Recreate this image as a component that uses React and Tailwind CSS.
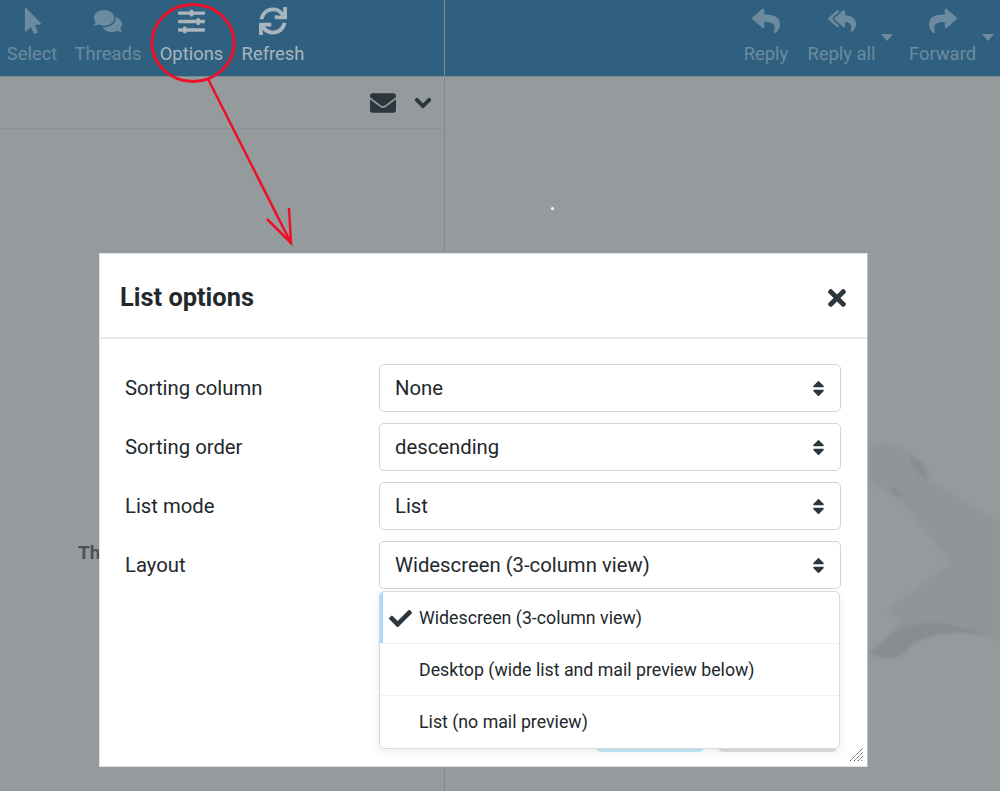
import { FaMousePointer, FaComments, FaSlidersH, FaSync, FaReply, FaReplyAll, FaShare, FaEnvelope, FaChevronDown, FaTimes, FaCheck, FaSort } from 'react-icons/fa';

function ToolButton({ icon: Icon, label, dim, size = 'text-[28px]', caret, width }) {
  return (
    <div className={`relative flex flex-col items-center ${width} ${dim ? 'text-[#6c8b9f]' : 'text-[#a9b5bc]'}`}>
      <div className="h-[40px] flex items-center justify-center">
        <Icon className={size} />
      </div>
      <span className="text-[18.4px] leading-[26px] whitespace-nowrap">{label}</span>
      {/* small dropdown caret */}
      {caret && <span className="absolute right-[-18px] top-[33px] w-0 h-0 border-x-[6px] border-x-transparent border-t-[7px] border-t-[#6c8b9f]" />}
    </div>
  );
}

function SelectRow({ label, value }) {
  return (
    <div className="flex items-center h-[48px]">
      <div className="w-[254px] text-[20.3px] text-[#22282c]">{label}</div>
      <div className="w-[462px] h-[48px] flex items-center justify-between pl-[15px] pr-[12px] rounded-[5px] border border-[#cfd6da] text-[20.3px] text-[#22282c]">
        <span>{value}</span>
        <FaSort className="text-[19px] text-[#2c363c]" />
      </div>
    </div>
  );
}

function PopupItem({ label, active, last }) {
  return (
    <div className={`relative h-[52px] flex items-center pl-[39px] text-[17.75px] text-[#22282c] ${last ? '' : 'pt-[2px] border-b border-[#f0f2f3]'}`}>
      {active && <span className="absolute left-0 top-0 bottom-0 w-[3px] bg-[#a8dcf8]" />}
      {active && <FaCheck className="absolute left-[9px] top-[15px] text-[23px] text-[#2c363c]" />}
      {label}
    </div>
  );
}

export default function App() {
  return (
    <div className="relative w-[1000px] h-[791px] overflow-hidden bg-[#959a9c] font-['Roboto',sans-serif]">
      <div className="flex h-full">
        {/* list column */}
        <div className="w-[445px] flex flex-col border-r border-[#84898c]">
          <div className="h-[77px] bg-[#2f607f] border-b border-[#7f8a90] flex gap-[18px] pl-[7px] pt-[1px]">
            <ToolButton icon={FaMousePointer} label="Select" dim width="w-[50px]" size="text-[26px] translate-x-[1px]" />
            <ToolButton icon={FaComments} label="Threads" dim width="w-[66px]" />
            <ToolButton icon={FaSlidersH} label="Options" width="w-[65px]" size="text-[27px]" />
            <ToolButton icon={FaSync} label="Refresh" width="w-[62px]" />
          </div>
          <div className="h-[52px] border-b border-[#8d9294] flex items-center justify-end gap-[18px] pr-[12px]">
            <FaEnvelope className="text-[26px] text-[#2b363d]" />
            <FaChevronDown className="text-[18px] text-[#2b363d]" stroke="currentColor" strokeWidth="30" />
          </div>
          <div className="flex-1 pl-[78px] pt-[410px] text-[19px] font-bold text-[#4a5357]">Th</div>
        </div>
        {/* preview column */}
        <div className="flex-1 flex flex-col">
          <div className="h-[77px] bg-[#2f607f] border-b border-[#7f8a90] flex justify-end gap-[34px] pr-[24px] pt-[1px]">
            <div className="flex gap-[20px]">
              <ToolButton icon={FaReply} label="Reply" dim width="w-[44px]" />
              <ToolButton icon={FaReplyAll} label="Reply all" dim caret width="w-[67px]" />
            </div>
            <ToolButton icon={FaShare} label="Forward" dim caret width="w-[67px]" />
          </div>
        </div>
      </div>

      {/* watermark behind dialog */}
      <svg className="absolute left-[860px] top-[430px] blur-[1.5px]" width="140" height="240" viewBox="0 0 140 240" fill="#909597">
        <path d="M8 22 C20 8 50 10 68 50 L140 93 L140 210 C105 198 75 200 50 215 C45 228 25 232 8 222 C25 215 30 200 40 190 L27 180 L92 133 L43 73 L10 50 Z" />
        <path d="M50 25 C60 28 68 38 68 50 C58 46 50 36 50 25 Z" fill="#888d8f" />
        <path d="M28 58 L36 58 L43 67 L35 66 Z" fill="#888d8f" />
        <path d="M8 222 C25 215 30 200 50 196 C80 188 110 198 140 210 C105 198 75 202 50 215 C45 228 25 232 8 222 Z" fill="#878c8e" />
      </svg>

      <span className="absolute left-[551px] top-[207px] w-[3px] h-[3px] rounded-full bg-white" />

      {/* dialog */}
      <div className="absolute left-[99px] top-[253px] w-[769px] h-[514px] bg-white border border-[#dfe3e5] border-r-[#b9bdbf] flex flex-col">
        <div className="h-[85px] shrink-0 pt-[4px] border-b-2 border-[#e8eaeb] flex items-center justify-between pl-[20px] pr-[17px]">
          <h2 className="text-[25.4px] font-bold text-[#22282c]">List options</h2>
          <FaTimes className="text-[26px] text-[#2b363d]" />
        </div>
        <div className="flex flex-col gap-[11px] pl-[25px] pt-[25px]">
          <SelectRow label="Sorting column" value="None" />
          <SelectRow label="Sorting order" value="descending" />
          <SelectRow label="List mode" value="List" />
          <SelectRow label="Layout" value="Widescreen (3-column view)" />
        </div>
        <div className="mt-auto flex justify-end gap-[14px] pr-[30px] pb-[14px]">
          <div className="w-[108px] h-[40px] rounded-[5px] bg-[#c3e7fb]" />
          <div className="w-[119px] h-[40px] rounded-[5px] bg-[#dce0e3]" />
        </div>
        {/* resize grip */}
        <svg className="absolute right-[3px] bottom-[4px]" width="15" height="15" viewBox="0 0 15 15" stroke="#4d5459" strokeWidth="1" strokeDasharray="1.5 0.5">
          <path d="M1 14 L14 1 M5 14 L14 5 M9 14 L14 9 M12.5 14 L14 12.5" />
        </svg>
      </div>

      {/* open select popup */}
      <div className="absolute left-[379px] top-[591px] w-[461px] h-[158px] bg-white rounded-[5px] border border-[#d5dadd] shadow-[0_3px_10px_rgba(0,0,0,0.08)] overflow-hidden">
        <PopupItem label="Widescreen (3-column view)" active />
        <PopupItem label="Desktop (wide list and mail preview below)" />
        <PopupItem label="List (no mail preview)" last />
      </div>

      {/* red annotation */}
      <svg className="absolute left-0 top-0 pointer-events-none" width="1000" height="791" fill="none" stroke="#ed1028">
        <ellipse cx="193" cy="43" rx="41" ry="38.5" strokeWidth="3" />
        <path d="M208 79 L291 243 M267 219 L291 243 L289 208" strokeWidth="2.5" />
      </svg>
    </div>
  );
}
